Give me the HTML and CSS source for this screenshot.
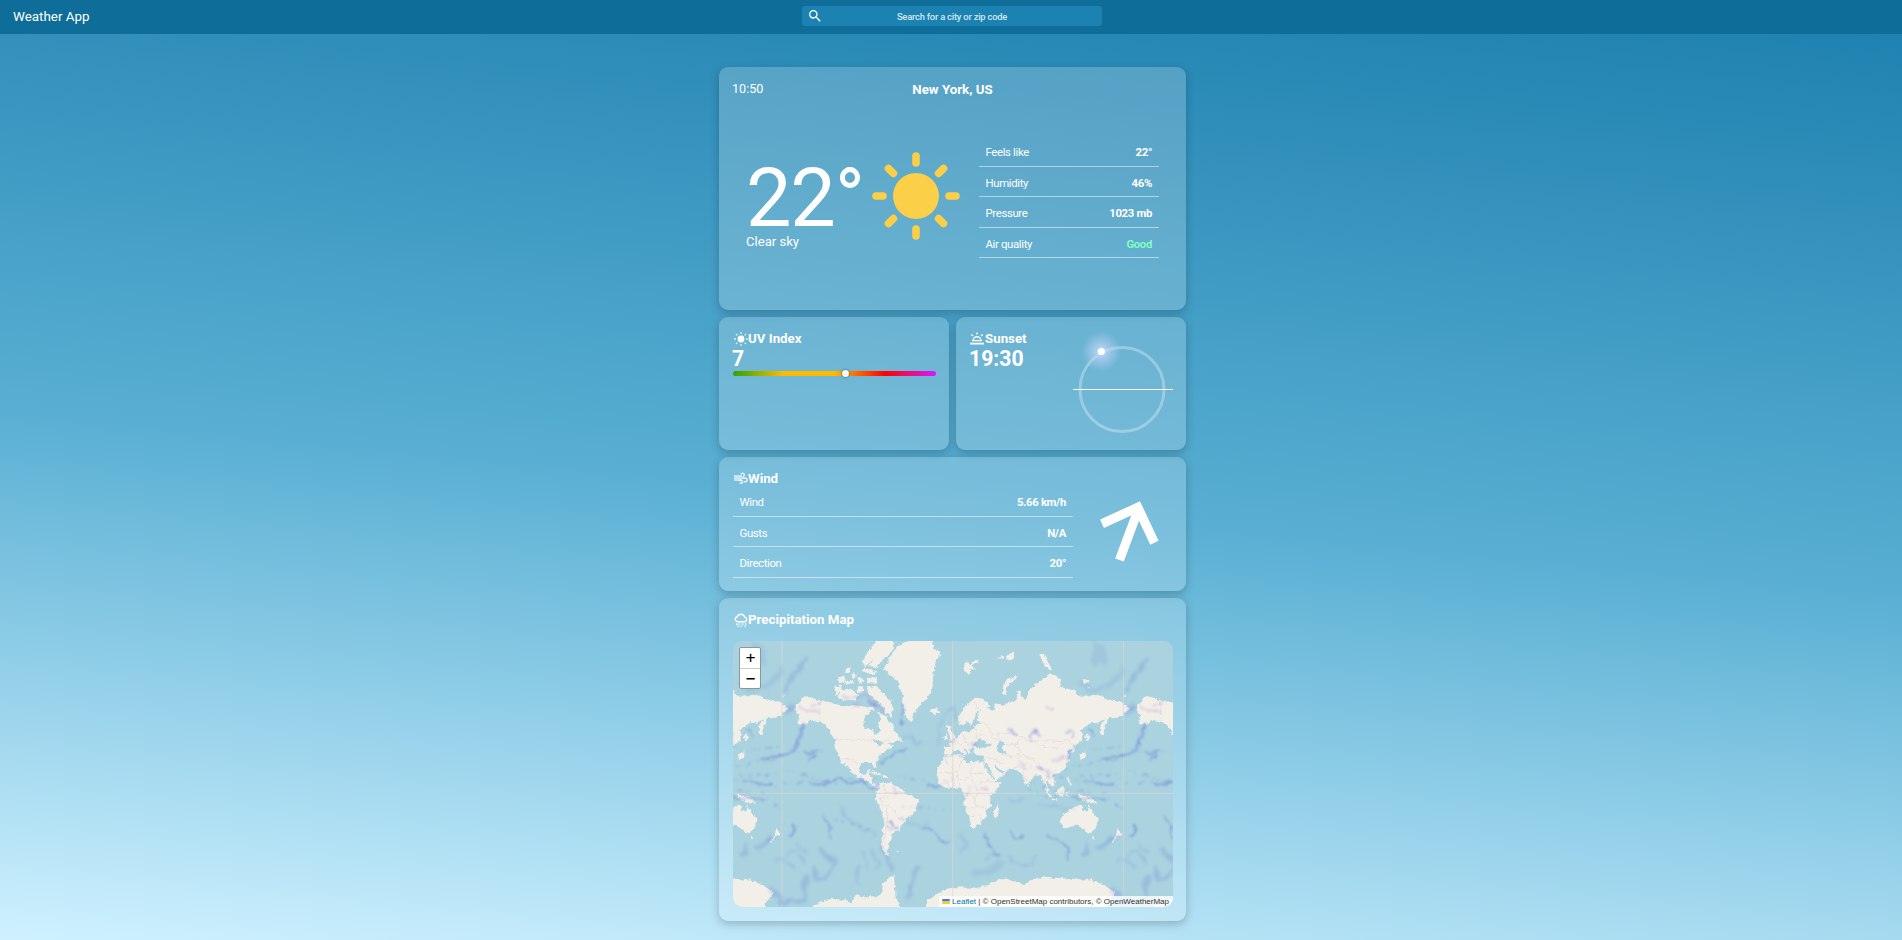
FILE: index.html
```html
<!DOCTYPE html>
<html lang="en">
<head>
<meta charset="utf-8">
<title>Weather App</title>
<link rel="stylesheet" href="styles.css">
</head>
<body>
<header class="topbar">
  <div class="brand">Weather App</div>
  <div class="search">
    <svg class="search-icon" viewBox="0 0 24 24"><path fill="currentColor" d="M15.5 14h-.79l-.28-.27A6.47 6.47 0 0 0 16 9.5 6.5 6.5 0 1 0 9.5 16c1.61 0 3.09-.59 4.23-1.57l.27.28v.79l5 4.99L20.49 19l-4.99-5zm-6 0C7.01 14 5 11.99 5 9.5S7.01 5 9.5 5 14 7.01 14 9.5 11.99 14 9.5 14z"/></svg>
    <span>Search for a city or zip code</span>
  </div>
</header>
<main class="dashboard">
  <section class="card current">
    <div class="current-head"><span class="time">10:50</span><span class="city">New York, US</span></div>
    <div class="current-body">
      <div class="reading"><div class="temp">22°</div><div class="summary">Clear sky</div></div>
      <svg class="sun" viewBox="-44 -44 88 88">
        <circle r="23" fill="#fbcf48"/>
        <path stroke="#fbcf48" stroke-width="7.6" stroke-linecap="round" d="M0-40v7M0 40v-7M-40 0h7M40 0h-7M-27.5-27.5l4.9 4.9M27.5-27.5l-4.9 4.9M-27.5 27.5l4.9-4.9M27.5 27.5l-4.9-4.9"/>
      </svg>
      <div class="stats">
        <div class="row"><span>Feels like</span><b>22°</b></div>
        <div class="row"><span>Humidity</span><b>46%</b></div>
        <div class="row"><span>Pressure</span><b>1023 mb</b></div>
        <div class="row"><span>Air quality</span><b class="good">Good</b></div>
      </div>
    </div>
  </section>

  <div class="pair">
    <section class="card">
      <h2 class="title"><svg class="icon" viewBox="0 0 14 14"><circle cx="7" cy="7" r="3.4" fill="#fff"/><path stroke="#fff" stroke-width="1.3" opacity=".75" d="M7 0v2M7 12v2M0 7h2M12 7h2M2 2l1.4 1.4M12 2l-1.4 1.4M2 12l1.4-1.4M12 12l-1.4-1.4"/></svg>UV Index</h2>
      <div class="value">7</div>
      <div class="uv-bar"><span class="uv-dot"></span></div>
    </section>
    <section class="card sunset">
      <div>
        <h2 class="title"><svg class="icon" viewBox="0 0 14 14" fill="none" stroke="#fff"><path stroke-width="1.8" d="M0 11.6h14"/><path stroke-width="1.4" d="M3.2 8.6a3.8 3.8 0 0 1 7.6 0M2 8.6h10M7 .4v2.2M1.4 2.4l1.5 1.6M12.6 2.4l-1.5 1.6"/></svg>Sunset</h2>
        <div class="value">19:30</div>
      </div>
      <svg class="orbit" viewBox="0 0 100 100">
        <defs><radialGradient id="glow"><stop offset="0" stop-color="#d2dcff" stop-opacity=".95"/><stop offset=".35" stop-color="#c5d6f8" stop-opacity=".6"/><stop offset="1" stop-color="#bcd6f4" stop-opacity="0"/></radialGradient></defs>
        <circle cx="49" cy="49.5" r="42" fill="none" stroke="#fff" stroke-opacity=".3" stroke-width="3"/>
        <path d="M0 49.5h100" stroke="#fff"/>
        <circle cx="28.3" cy="11.5" r="20" fill="url(#glow)"/><circle cx="28.3" cy="11.5" r="3.6" fill="#fff"/>
      </svg>
    </section>
  </div>

  <section class="card wind">
    <div class="wind-data">
      <h2 class="title"><svg class="icon" viewBox="0 0 14 14" fill="none" stroke="#fff"><path fill="#fff" stroke="none" opacity=".6" d="M0 3h8v6H0z"/><path stroke-width="1.2" d="M7 2.4a1.7 1.7 0 1 1 1.8 2.2M8 6.2h3.4a1.8 1.8 0 1 1-1.4 2.9M5 8.3h2a1.5 1.5 0 1 1-1.3 2.2"/></svg>Wind</h2>
      <div class="row"><span>Wind</span><b>5.66 km/h</b></div>
      <div class="row"><span>Gusts</span><b>N/A</b></div>
      <div class="row"><span>Direction</span><b>20°</b></div>
    </div>
    <svg class="arrow" viewBox="0 0 72 72"><path fill="none" stroke="#fff" stroke-width="9.2" d="M20.5 61 38 14M3 24.8 38.8 8.3 55.4 43.8"/></svg>
  </section>

  <section class="card precipitation">
    <h2 class="title"><svg class="icon" viewBox="0 0 14 14" fill="none" stroke="#fff" stroke-width="1.4"><path d="M3.4 8.8a2.6 2.6 0 0 1-.2-5.1 4 4 0 0 1 7.5.4 2.4 2.4 0 0 1 .1 4.7zM2.4 10.5l.7 1.5M5.3 10.3v1.4M8.3 10.3l.6 1.4M11.4 10.3l.6 1.4M4 12.8l.4 1.2M7.3 12.6v1.4M10.6 12.6l.4 1.4"/></svg>Precipitation Map</h2>
    <div class="map">
      <svg class="map-canvas" viewBox="69 153 1320 798" preserveAspectRatio="none">
        <defs>
          <filter id="coast" x="-5%" y="-5%" width="110%" height="110%" color-interpolation-filters="sRGB"><feTurbulence type="fractalNoise" baseFrequency=".07" numOctaves="3" seed="4"/><feDisplacementMap in="SourceGraphic" scale="15" xChannelSelector="R" yChannelSelector="G"/></filter>
          <filter id="soft" x="-10%" y="-10%" width="120%" height="120%" color-interpolation-filters="sRGB"><feTurbulence type="fractalNoise" baseFrequency=".04" numOctaves="2" seed="9"/><feDisplacementMap in="SourceGraphic" scale="24" xChannelSelector="R" yChannelSelector="G"/><feGaussianBlur stdDeviation="2.4"/></filter>
          <filter id="haze" x="-10%" y="-10%" width="120%" height="120%" color-interpolation-filters="sRGB"><feTurbulence type="fractalNoise" baseFrequency=".03" numOctaves="2" seed="2"/><feDisplacementMap in="SourceGraphic" scale="34" xChannelSelector="R" yChannelSelector="G"/><feGaussianBlur stdDeviation="4"/></filter>
          <g id="world">
            <g filter="url(#coast)" fill="#f2efe9">
              <path d="M258 345 285 318 300 325 345 333 375 340 400 352 425 345 450 347 470 352 482 365 465 380 460 397 468 417 490 421 500 435 507 425 506 405 511 385 505 368 520 372 532 385 545 398 550 415 563 432 575 455 555 453 535 462 550 470 530 480 520 485 510 500 497 518 500 537 492 535 487 521 470 518 452 520 447 540 455 553 468 550 474 538 480 538 476 556 484 563 487 577 497 582 510 584 507 591 495 591 480 580 465 567 445 562 425 548 415 530 403 513 412 535 400 522 385 495 378 478 375 452 362 430 345 405 330 395 305 390 290 400 270 407 258 395 272 375 256 365z"/>
              <path d="M505 580 520 577 545 580 560 592 583 600 585 613 610 620 627 630 622 650 612 670 590 685 580 700 565 722 556 719 548 732 543 750 535 765 532 783 540 798 525 795 517 780 515 757 520 720 525 685 510 655 497 625 500 605 508 592z"/>
              <path d="M600 150 665 150 670 175 692 185 680 210 672 235 668 280 655 320 632 345 615 362 603 393 590 387 580 350 578 315 568 290 555 265 540 255 522 235 540 200 570 165z"/>
              <path d="M455 215 478 178 500 150 545 150 552 175 530 200 512 218 500 232 477 228 490 210 462 232zM452 238 472 236 500 243 497 252 465 250zM380 262 400 255 408 272 388 279zM406 238 418 235 421 247 407 250zM425 252 438 250 440 264 423 266zM404 274 428 269 432 279 408 282zM374 287 392 287 398 307 375 313zM395 302 425 297 445 315 430 334 404 332 384 320zM445 265 458 262 462 277 448 280zM470 264 500 262 502 281 475 280zM470 292 498 287 515 305 538 325 550 352 545 382 525 370 522 350 500 333 478 316zM440 290 458 288 460 303 444 306zM470 352 490 350 495 363 478 362zM555 441 571 440 577 453 558 450zM662 362 677 354 688 364 675 374 663 370zM481 543 503 547 520 556 503 555zM518 558 533 558 532 564 520 564z"/>
              <path d="M702 472 722 470 720 455 741 446 752 430 762 423 770 425 787 420 794 405 805 401 817 399 800 391 803 372 812 357 797 371 792 395 781 412 774 392 762 405 746 402 744 378 768 347 794 324 815 322 842 347 834 357 850 362 855 340 880 344 896 337 912 340 920 325 922 303 932 302 936 322 947 331 960 297 985 279 1020 250 1050 265 1048 290 1095 302 1105 317 1155 315 1195 328 1238 340 1260 356 1245 367 1232 380 1210 385 1195 379 1190 400 1176 438 1169 426 1172 405 1185 385 1165 398 1136 400 1115 420 1119 450 1098 464 1089 472 1093 489 1084 491 1082 474 1075 478 1070 484 1080 500 1067 530 1052 547 1034 553 1025 557 1037 578 1029 590 1017 579 1010 570 1010 585 1020 605 1009 598 1003 578 992 559 976 556 960 570 955 589 945 580 937 555 917 538 898 535 891 542 877 560 853 577 844 563 828 530 823 515 825 497 800 496 790 487 794 475 780 476 785 491 777 493 765 473 757 472 771 490 762 499 747 476 735 480 728 486 722 497 703 496z"/>
              <path d="M705 500 750 493 759 500 756 511 777 519 782 511 824 518 825 530 835 550 852 577 873 577 865 592 840 620 843 645 830 660 828 680 813 700 798 712 782 714 773 675 763 645 764 612 750 595 735 592 705 594 688 580 680 555 683 535z"/>
              <path d="M853 661 868 645 865 672 857 685 852 680zM1052 677 1080 660 1100 645 1120 650 1116 660 1130 666 1135 642 1145 665 1163 685 1160 710 1146 730 1126 725 1111 711 1090 705 1060 717 1053 700zM1142 738 1150 738 1148 747zM1223 717 1234 730 1221 741 1206 760 1203 755 1218 738zM1001 588 1012 600 1026 620 1020 622 1008 607zM1024 625 1042 628 1040 632 1025 630zM1038 604 1059 588 1065 597 1060 618 1044 616zM1068 603 1080 604 1070 611 1076 622 1067 618zM1102 612 1125 618 1148 627 1160 641 1140 636 1120 632zM1070 560 1076 560 1080 580 1087 592 1077 587zM1108 496 1128 487 1130 465 1127 488 1127 500 1112 506zM1132 456 1126 442 1134 430 1139 453zM712 452 721 448 716 429 708 404 722 409 732 439 739 446zM700 443 707 430 712 442 703 450zM760 220 772 214 778 222 800 209 805 216 787 225 795 240 782 238 775 259 765 240zM860 205 880 198 882 207zM888 193 912 188 912 205 890 210zM876 312 879 290 890 272 913 258 923 260 905 276 892 290 889 315zM988 196 1003 194 1012 213 1028 240 1014 239 1000 220zM1117 268 1138 267 1138 280 1120 279zM1147 278 1156 281 1148 283zM1130 294l8-4 2 6zM557 783h9v2h-9zM1240 317h8v3h-8z"/>
              <path d="M310 948 345 930 375 926 400 930 425 940 437 912 475 925 510 915 520 900 515 888 538 865 552 854 557 925 575 960H305zM652 940 655 927 700 900 728 892 785 893 835 885 885 862 925 880 943 885 970 867 1005 860 1055 865 1105 867 1145 870 1185 887 1212 905 1206 925 1189 935 1189 960H650z"/>
            </g>
            <g fill="#aad3df" filter="url(#coast)"><path d="M790 461 808 445 822 455 845 463 840 471 810 474 792 470zM860 465 873 452 885 461 877 474 887 488 877 498 866 485zM823 518 830 522 849 553 854 571 846 563zM853 525 864 532 882 546 873 549 857 536zM488 450 510 454 527 462 505 466 500 460z"/></g>
            <g fill="none" stroke="#d6bfcd" stroke-width="1.5" opacity=".75" filter="url(#coast)">
              <path d="M328 333V392M376 448H475L500 455 540 450M397 507 430 512 450 530M520 580 530 608 510 627 520 645 540 650 555 660 560 680 580 690M530 608 560 610 583 604M530 650 528 720 522 760M535 690 550 710M505 625 540 620"/>
              <path d="M683 548H730V594M705 500 710 520 740 545 756 511M740 545 750 590M782 520V562L750 570M824 550H785M782 562 800 600 835 590M764 612 790 618 800 650 770 655M800 650 830 655M790 618 812 610 840 620M780 680 810 675 813 700M700 570 720 590M812 580 830 570 850 578"/>
              <path d="M782 412 800 420 798 445 825 455M760 425 762 450 780 476M740 455 760 465M795 330 802 358M820 395 840 420 850 445 870 450M870 450 860 430 910 430 940 440 960 455 1000 450 1050 455 1075 450 1090 470M885 460 915 465 940 440M915 465 935 490 950 500 985 520M960 440 985 467 1045 475 1060 460M880 490 905 500 925 490 930 520 915 535M985 520 1000 540 1015 550 1040 540M830 500 860 510 880 525M937 553 950 520M1010 570 1020 550M825 430 800 440"/>
            </g>
          </g>
          <g id="rain" fill="none" stroke-linecap="round" stroke-linejoin="round" stroke="#626fd9">
            <g filter="url(#soft)" opacity=".5" stroke-width="5">
              <path d="M285 400C265 430 275 480 230 493S185 503 155 507M290 490C305 498 310 485 325 485M300 510 315 495M510 520C530 512 545 495 560 490S580 482 590 477M575 400C572 370 580 365 580 345M305 587C340 570 360 585 375 570S410 585 430 577 460 575 473 585 490 590 505 590M655 590 690 588M340 685C355 695 365 710 362 722S360 740 358 750M250 706C255 722 250 740 235 742M645 715C680 720 680 745 695 752S710 755 718 754M900 725C915 745 930 745 940 735M825 730C830 765 845 775 850 785S860 792 865 795M1010 732C1030 750 1050 755 1065 765S1080 790 1070 805M480 330 500 350M1090 465C1080 475 1082 490 1070 510M980 425C960 420 958 440 962 450M965 425 990 435M1070 425C1085 420 1090 430 1085 445M1090 620C1120 635 1150 620 1180 630M1125 575C1150 570 1170 595 1210 580M890 415 920 435M1140 420 1155 435M545 700 560 715"/>
            </g>
            <g filter="url(#haze)" opacity=".22" stroke-width="14">
              <path d="M285 210C270 240 250 250 225 300M230 370 245 340M330 775C325 790 360 800 380 815M380 815C365 840 350 870 320 870M318 870V830M295 855C280 890 285 920 275 930M275 935H210L190 900M625 835C615 880 600 890 595 920M515 770C530 800 535 825 555 845M1130 765 1125 790M1195 745 1165 780"/>
            </g>
            <g filter="url(#haze)" opacity=".12" stroke-width="18">
              <path d="M1160 160C1150 190 1160 200 1160 220M1175 170V220M1120 290C1160 310 1220 290 1235 240M880 815C870 840 830 840 800 850M760 745C780 760 775 775 750 780"/>
            </g>
            <g filter="url(#haze)" opacity=".22" stroke-width="6">
              <path d="M460 785C455 810 475 820 475 840M490 775C485 800 500 810 500 830M260 760C270 780 280 780 290 790M150 780C170 750 180 750 200 740M690 465C680 440 685 400 710 370S735 370 745 375M575 455C590 440 610 440 635 460M820 810 870 790M900 630H945M230 800C260 780 280 800 290 830M580 680C600 720 640 720 660 700M980 640C1020 660 1060 640 1100 660M900 800C920 830 960 830 980 800M440 830V890M250 830C230 810 210 800 200 820M385 650C420 700 460 720 500 740"/>
            </g>
            <g filter="url(#soft)" opacity=".26" stroke-width="6" stroke="#a36ad0">
              <path d="M398 320 470 320 500 340 520 370M430 350 450 345M225 345 245 365M270 355 320 365M310 345 330 340M935 525 950 540M940 560 950 570M980 535 1010 545 1025 560M820 600 830 590M780 600 770 620M880 550 890 555M780 460 800 463M1010 350 1030 360M740 450 725 465M700 580 720 570M1030 510 1060 500M545 590 560 605M530 710 550 720"/>
            </g>
            <g filter="url(#soft)" opacity=".36" stroke-width="4" stroke-dasharray="5 16 1 22 14 18">
              <path d="M220 580 500 560M230 540 400 590M560 560 680 575M580 650 700 660M1050 560 1240 590M1090 530 1240 500M940 520 1060 560M960 580 1060 610M780 590 840 600M1150 480 1230 470M1180 610 1240 660M1070 540 1150 570M750 500 800 460M960 600 1050 630M240 480 360 490M380 690 500 720M1120 560 1230 550M1060 600 1150 610"/>
            </g>
          </g>
        </defs>
        <path fill="#aad3df" d="M0 0h1400v1000H0z"/>
        <use href="#world" x="-1024"/><use href="#world"/><use href="#world" x="1024"/>
        <path d="M216 153V951M728 153V951M1240 153V951M69 610H1389" fill="none" stroke="#dfd5d3" stroke-width="4" opacity=".55"/>
        <use href="#rain" x="-1024"/><use href="#rain"/><use href="#rain" x="1024"/>
      </svg>
      <div class="zoom"><span class="zoom-btn">+</span><span class="zoom-btn">−</span></div>
      <div class="attribution"><svg class="flag" viewBox="0 0 12 8"><path fill="#4c7be1" d="M0 0h12v4H0z"/><path fill="#ffd500" d="M0 4h12v3H0z"/><path fill="#e0bc00" d="M0 7h12v1H0z"/></svg> <a>Leaflet</a> | © OpenStreetMap contributors, © OpenWeatherMap</div>
    </div>
  </section>
</main>
</body>
</html>
```
FILE: styles.css
```css
* { box-sizing: border-box; }
html { font-size: 14px; height: 100%; }
body {
  margin: 0;
  height: 940px;
  overflow: hidden;
  font-family: Roboto, "Liberation Sans", sans-serif;
  color: #fff;
  background: linear-gradient(5.5deg, #cff1ff 0%, #59afd3 47%, #1c7fae 100%);
}
.topbar {
  height: 34px;
  display: grid;
  grid-template-columns: 802px 300px 1fr;
  align-items: start;
  background: #0e6e99;
}
.brand { padding-left: 13px; font-size: 13.4px; line-height: 33px; }
.search {
  height: 20px;
  margin-top: 6px;
  padding: 0 7px;
  display: grid;
  grid-template-columns: 14px 1fr 14px;
  align-items: center;
  border-radius: 3px;
  background: #1c82b1;
  text-align: center;
  font-size: 9.33px;
  font-weight: 500;
  letter-spacing: -.2px;
  color: #d4e8f2;
}
.search-icon { width: 16px; height: 16px; margin-left: -2px; color: #fff; }
.dashboard { width: 467px; margin: 33px 0 0 719px; display: flex; flex-direction: column; gap: 7px; }
.card {
  border-radius: 9px;
  background: rgba(255, 255, 255, .2);
  box-shadow: 0 3px 10px rgba(0, 0, 0, .22);
  padding: 14px 13px 14px 14px;
}
.current { height: 243px; }
.current-head { display: grid; grid-template-columns: 1fr auto 1fr; font-size: 13.3px; line-height: 16px; }
.time { font-size: 12.6px; margin-left: -1px; }
.city { font-weight: 700; padding-top: 1px; margin-left: -1px; }
.current-body { display: flex; align-items: center; margin: 38px 14px 0 13px; }
.reading { width: 126px; padding-top: 17px; }
.temp { font-size: 81px; line-height: 71px; letter-spacing: -1.2px; white-space: nowrap; }
.summary { font-size: 13.1px; line-height: 16px; }
.sun { width: 88px; height: 88px; flex: none; margin-top: -4px; }
.stats { width: 180px; margin: 0 0 1px auto; }
.row {
  height: 30.6px;
  display: flex;
  align-items: center;
  justify-content: space-between;
  padding: 2.5px 7px 0 6.5px;
  border-bottom: 1px solid rgba(255, 255, 255, .5);
  font-size: 11.4px;
  letter-spacing: -.36px;
}
.row b { font-weight: 700; }
.row .good { color: #7dffc0; }
.pair { display: grid; grid-template-columns: 1fr 1fr; gap: 7px; height: 133px; }
.title { margin: 0; display: flex; align-items: center; height: 15px; font-size: 13.3px; font-weight: 700; }
.icon { width: 14px; height: 14px; margin-left: 1px; flex: none; }
.sunset .icon { margin-left: 0; margin-right: 1px; }
.value { font-size: 21.2px; line-height: 24px; padding-top: 1px; font-weight: 700; margin-left: -1px; }
.uv-bar { height: 5px; border-radius: 3px; background: linear-gradient(90deg, #2aa505, #ffbb00 25%, #ffbb00 50%, #f00 75%, #d41cff); }
.uv-dot { display: block; position: relative; left: 109px; top: -1px; width: 7px; height: 7px; border-radius: 50%; background: #fff; box-shadow: 0 0 2px #333; }
.sunset { display: flex; justify-content: space-between; }
.orbit { width: 100px; height: 100px; margin: 9px 0 -18px 0; overflow: visible; }
.wind { height: 134px; display: flex; }
.wind-data { width: 340px; }
.arrow { width: 72px; height: 72px; margin: 28px 0 0 26px; }
.precipitation { height: 323px; }
.map { position: relative; width: 440px; height: 266px; margin-top: 14px; overflow: hidden; border-radius: 9px; }
.map-canvas { display: block; width: 440px; height: 266px; }
.zoom { position: absolute; left: 6px; top: 6px; width: 22px; height: 42px; border: 1px solid #879aa0; border-radius: 2px; background: #fff; overflow: hidden; }
.zoom-btn { display: block; height: 20px; padding-left: 1px; text-align: center; color: #000; font: 400 16px/20px "DejaVu Sans Mono", monospace; }
.zoom-btn + .zoom-btn { border-top: 1px solid #ccc; line-height: 19px; }
.attribution {
  position: absolute; right: 0; bottom: 0; height: 11px; padding: 0 4px 0 3px;
  background: rgba(255, 255, 255, .8); color: #333;
  font: 8px/11px "Liberation Sans", sans-serif; white-space: nowrap;
}
.attribution a { color: #0078a8; }
.flag { width: 8px; height: 5px; }
```
